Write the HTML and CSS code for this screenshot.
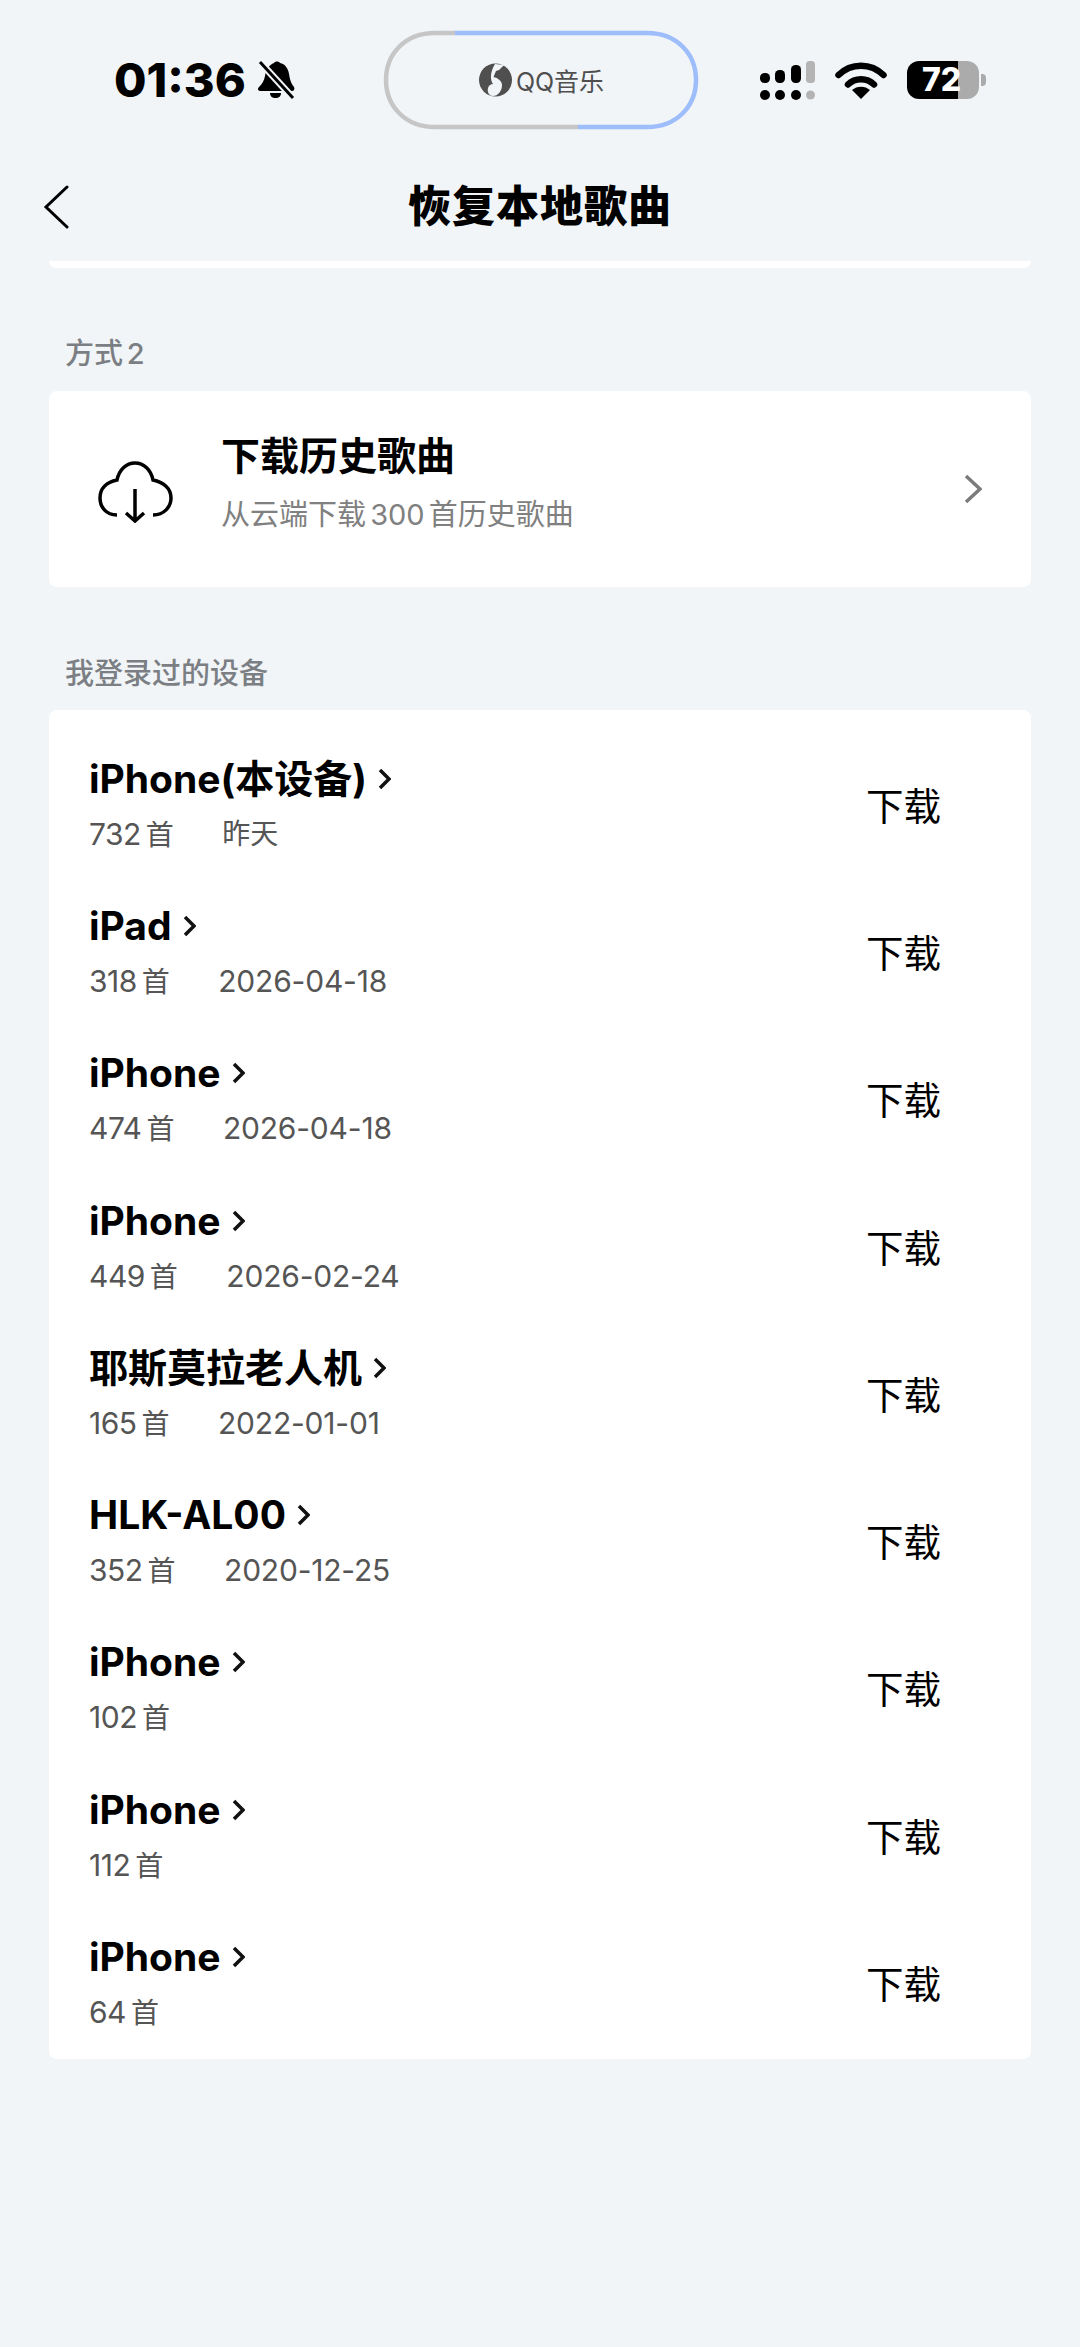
FILE: index.html
```html
<!DOCTYPE html>
<html lang="zh">
<head>
  <meta charset="UTF-8" />
  <title>恢复本地歌曲</title>
  <link rel="stylesheet" href="styles.css">
</head>
<body>

  <div class="status-bar">
    <div class="status-left">
      <span class="time">01:36</span>
      <svg class="bell" width="38" height="40" viewBox="0 0 38 40">
        <path d="M17 3c1-2 5-2 6 0 5 1 8 5 9 11 1 6 2 9 5 13 1 2 0 4-2 4H4c-3 0-4-2-2-4 3-3 5-6 6-11 1-7 4-11 9-13z" fill="#000"/>
        <path d="M13 33h11c0 3-2 5-5.500 5S13 36 13 33z" fill="#000"/>
        <path d="M3 2l33 36" stroke="#f1f5f8" stroke-width="7"/>
        <path d="M3 2l33 36" stroke="#000" stroke-width="3"/>
      </svg>
    </div>
    <div class="island">
      <svg class="island-ring" width="316" height="100" viewBox="0 0 316 100">
        <path d="M72 3H264C294 3 313 24 313 50S294 97 264 97H195" fill="none" stroke="#9dbdfb" stroke-width="4.500"/>
        <path d="M72 3H52C22 3 3 24 3 50S22 97 52 97H195" fill="none" stroke="#c6c6c6" stroke-width="4.500"/>
      </svg>
      <svg class="qq-logo" width="35" height="34" viewBox="0 0 35 34">
        <circle cx="17.500" cy="17" r="16.500" fill="#4f4f4f"/>
        <path d="M17 1L26 2 21 7 18 8 15.500 14C20 15 24 18 24 22 24 28 20 33 15 33 11 33 9 29 10 25 11 22 13 21 15 21 12 17 12 9 17 1z" fill="#f1f5f8"/>
      </svg>
      <span class="island-text">QQ音乐</span>
    </div>
    <div class="status-right">
      <svg width="55" height="39" viewBox="0 0 55 39">
        <rect x="0" y="12" width="10" height="10" rx="4.500" fill="#000"/>
        <rect x="15" y="9" width="10" height="13" rx="4.500" fill="#000"/>
        <rect x="31" y="4" width="10" height="18" rx="4.500" fill="#000"/>
        <rect x="46" y="0" width="9" height="22" rx="3.500" fill="#b4b4b4"/>
        <circle cx="5" cy="34" r="5" fill="#000"/>
        <circle cx="20" cy="34" r="5" fill="#000"/>
        <circle cx="36" cy="34" r="5" fill="#000"/>
        <circle cx="50.500" cy="34" r="4.500" fill="#b4b4b4"/>
      </svg>
      <svg class="wifi" width="52" height="38" viewBox="0 0 52 38">
        <path d="M3.500 14C16 1.500 36 1.500 48.500 14" fill="none" stroke="#000" stroke-width="6.500" stroke-linecap="round"/>
        <path d="M13 23.500C20 16.500 32 16.500 39 23.500" fill="none" stroke="#000" stroke-width="6.500" stroke-linecap="round"/>
        <path d="M17 29c5-4.500 13-4.500 18 0l-9 9z" fill="#000"/>
      </svg>
      <div class="battery">
        <div class="battery-body">
          <span class="battery-num">72</span>
        </div>
        <div class="battery-cap"></div>
      </div>
    </div>
  </div>

  <div class="nav-bar">
    <svg class="back" width="26" height="44" viewBox="0 0 26 44">
      <path d="M24 2L3 22l21 20" fill="none" stroke="#000" stroke-width="3" stroke-linecap="round"/>
    </svg>
    <h1>恢复本地歌曲</h1>
  </div>

  <div class="card-stub"></div>

  <div class="section-label label-first">方式 2</div>
  <div class="card history">
    <svg class="cloud" width="75" height="62" viewBox="0 0 75 62">
      <path d="M19 54C8 54 2 46 2 37 2 27 9 21 19 19 21 9 28 2 37 2 46 2 53 9 55 19 65 21 73 27 73 37 73 46 66 54 55 54" fill="none" stroke="#000" stroke-width="3.500"/>
      <path d="M37 28V60M28 52l9 8 9-8" fill="none" stroke="#000" stroke-width="3.500"/>
    </svg>
    <div class="history-text">
      <div class="history-title">下载历史歌曲</div>
      <div class="history-sub">从云端下载 300 首历史歌曲</div>
    </div>
    <svg class="more" width="18" height="30" viewBox="0 0 18 30">
      <path d="M2 2l14 13L2 28" fill="none" stroke="#7b7b7b" stroke-width="3.500"/>
    </svg>
  </div>

  <div class="section-label label-second">我登录过的设备</div>
  <div class="card device-list" id="devices"></div>

  <script>
    const devices = [
      ["iPhone(本设备)", "732", "昨天"],
      ["iPad", "318", "2026-04-18"],
      ["iPhone", "474", "2026-04-18"],
      ["iPhone", "449", "2026-02-24"],
      ["耶斯莫拉老人机", "165", "2022-01-01"],
      ["HLK-AL00", "352", "2020-12-25"],
      ["iPhone", "102", ""],
      ["iPhone", "112", ""],
      ["iPhone", "64", ""]
    ];

    const list = document.getElementById("devices");
    devices.forEach(d => {
      const row = document.createElement("div");
      row.className = "device";
      row.innerHTML = `
        <div class="device-info">
          <div class="device-name">
            <span>${d[0]}</span>
            <svg width="13" height="22" viewBox="0 0 13 22"><path d="M2 2l9 9-9 9" fill="none" stroke="#111" stroke-width="3.500"/></svg>
          </div>
          <div class="device-meta">
            <span class="device-count">${d[1]} <span class="cjk">首</span></span>
            <span class="${d[2] === "昨天" ? "cjk" : "device-date"}">${d[2]}</span>
          </div>
        </div>
        <div class="device-action">下载</div>
      `;
      list.appendChild(row);
    });
  </script>

</body>
</html>
```

FILE: styles.css
```css
html, body {
  margin: 0;
  height: 2347px;
  overflow: hidden;
}
body {
  background-color: #f1f5f8;
  color: #000;
  font-family: Inter, "Noto Sans CJK SC", sans-serif;
}
.status-bar {
  display: flex;
  align-items: center;
  height: 100px;
  padding-top: 30px;
}
.status-left {
  display: flex;
  align-items: center;
  width: 303px;
  padding-left: 114px;
  box-sizing: border-box;
  gap: 11px;
  flex: none;
}
.time {
  font-size: 47px;
  font-weight: 800;
  line-height: 50px;
}
.bell {
  flex: none;
}
.island {
  position: relative;
  display: flex;
  align-items: center;
  justify-content: center;
  gap: 3px;
  width: 316px;
  height: 100px;
  margin-left: 80px;
  flex: none;
}
.island-ring {
  position: absolute;
  left: 0;
  top: 0;
}
.island-text {
  font-size: 25px;
  color: #4f4f4f;
}
.status-right {
  display: flex;
  align-items: center;
  margin-left: 61px;
  gap: 20px;
}
.battery {
  display: flex;
  align-items: center;
  gap: 2px;
}
.battery-body {
  width: 72px;
  height: 38px;
  border-radius: 12px;
  background: linear-gradient(90deg, #000 0, #000 51px, #ababab 51px);
  display: flex;
  align-items: center;
  padding-left: 15px;
  box-sizing: border-box;
}
.battery-num {
  color: #fff;
  font-size: 32px;
  font-weight: 800;
  line-height: 38px;
}
.battery-cap {
  width: 5px;
  height: 12px;
  border-radius: 0 4px 4px 0;
  background: #ababab;
}
.nav-bar {
  position: relative;
  display: flex;
  align-items: center;
  justify-content: center;
  height: 76px;
  margin-top: 39px;
}
.nav-bar h1 {
  margin: 0;
  padding-bottom: 8px;
  font-size: 43px;
  font-weight: 900;
  letter-spacing: 1px;
}
.back {
  position: absolute;
  left: 43px;
  top: 16px;
}
.card-stub {
  height: 7px;
  margin: 16px 49px 0;
  background: #fff;
  border-radius: 0 0 8px 8px;
}
.section-label {
  font-size: 29px;
  font-weight: 500;
  line-height: 40px;
  word-spacing: -4px;
  color: #7b7f83;
  margin-left: 65px;
}
.label-first {
  margin-top: 66px;
  margin-bottom: -1px;
}
.label-second {
  margin-top: 67px;
  margin-bottom: -1px;
}
.card {
  background: #fff;
  margin: 0 49px;
  border-radius: 8px;
}
.history {
  display: flex;
  align-items: center;
  height: 196px;
  margin-top: 18px;
}
.cloud {
  margin-left: 49px;
  margin-top: 6px;
  flex: none;
}
.history-text {
  margin-left: 48px;
  flex: 1;
  margin-top: -14px;
}
.history-title {
  font-size: 39px;
  font-weight: 700;
  line-height: 52px;
}
.history-sub {
  font-size: 29px;
  line-height: 40px;
  margin-top: 13px;
  word-spacing: -4px;
  color: #808080;
}
.more {
  margin-right: 49px;
}
.device-list {
  margin-top: 17px;
  height: 1349px;
  padding-top: 20px;
  box-sizing: border-box;
}
.device {
  display: flex;
  align-items: center;
  height: 147.300px;
  padding-left: 40px;
  padding-right: 90px;
}
.device-info {
  flex: 1;
}
.device-name {
  display: flex;
  align-items: center;
  gap: 11px;
  font-size: 39px;
  font-weight: 700;
  line-height: 52px;
}
.device-meta {
  display: flex;
  gap: 49px;
  font-size: 30px;
  line-height: 40px;
  margin-top: 9px;
  color: #555;
}
.device-count {
  letter-spacing: -0.500px;
  word-spacing: -3px;
}
.device-date {
  letter-spacing: -0.200px;
}
.cjk {
  font-size: 28px;
}
.device-action {
  font-size: 37.500px;
  margin-top: -1px;
}
```
